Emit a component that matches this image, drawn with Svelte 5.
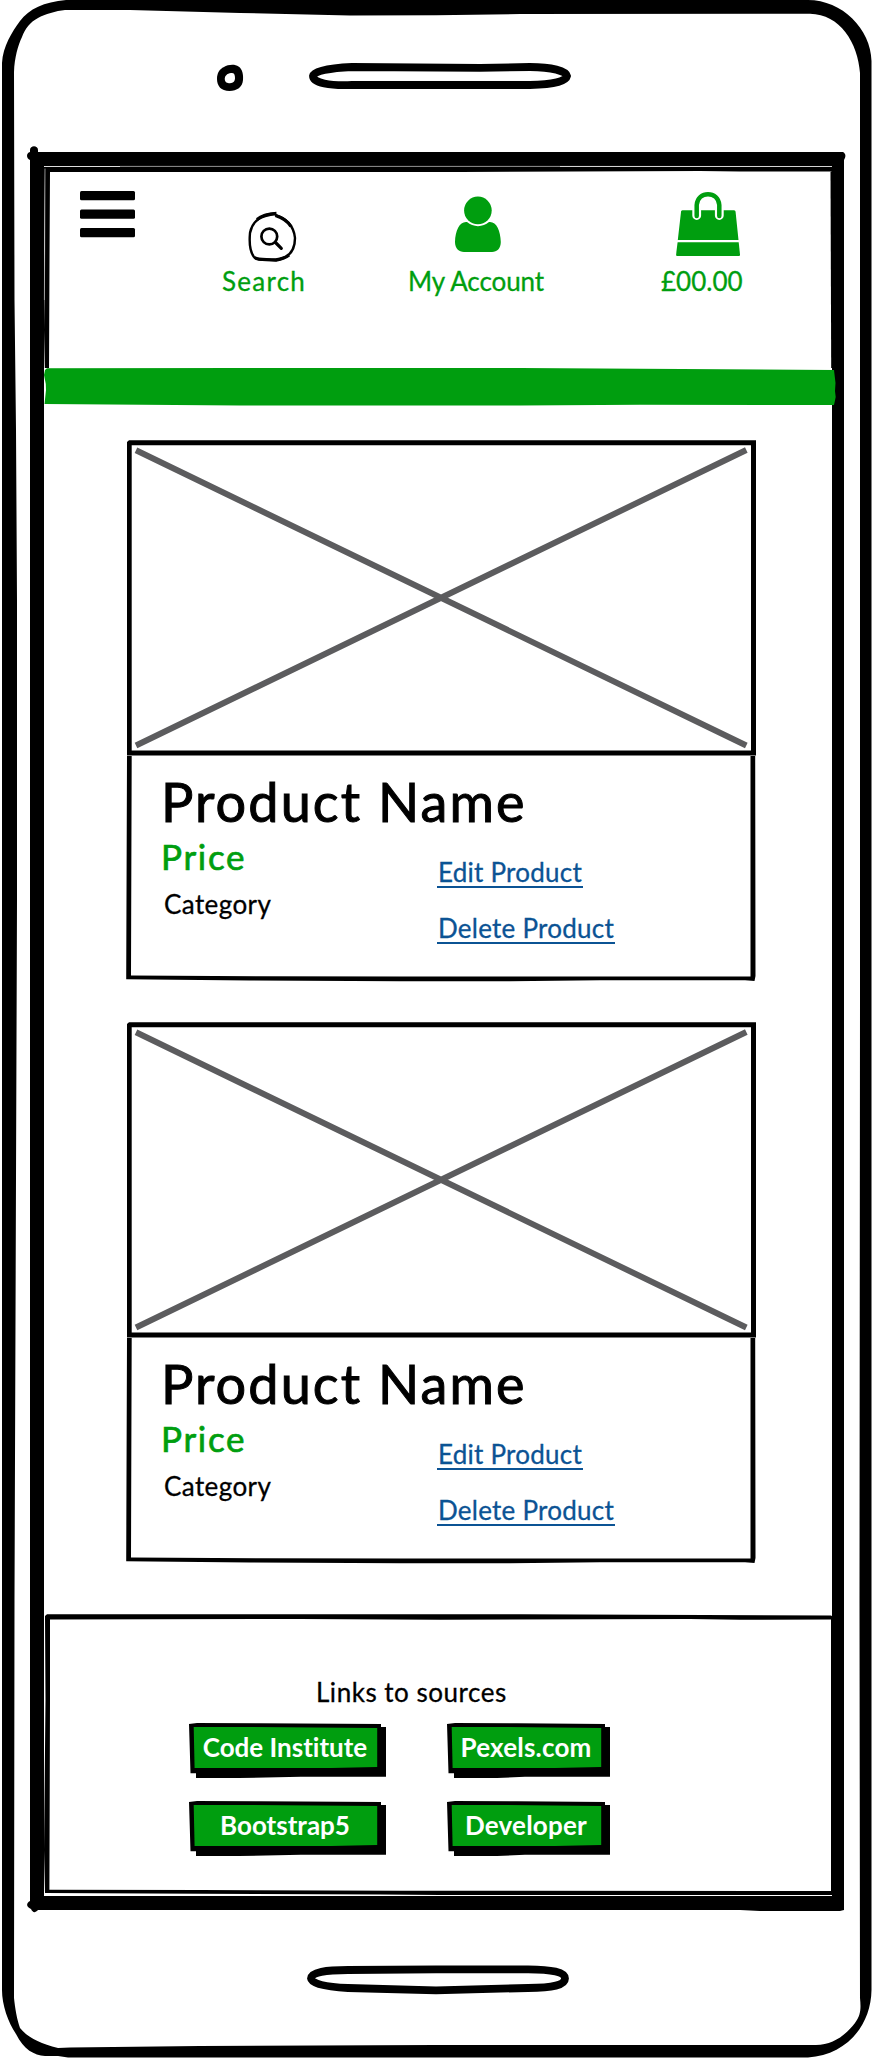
<script>
  const products = [1, 2];
  const sources = [
    { label: 'Code Institute', face: 192, spacing: 0 },
    { label: 'Pexels.com', face: 158, spacing: 0.19 },
    { label: 'Bootstrap5', face: 192, spacing: 0 },
    { label: 'Developer', face: 158, spacing: 0.2 }
  ];
</script>

<div class="phone">
  <svg class="shell" width="872" height="2058" viewBox="0 0 872 2058" aria-hidden="true">
    <!-- outer body -->
    <path fill-rule="evenodd" d="M66 0H808C842 0 871 29 871.5 61V1990C871 2026 846 2055 808 2057.5H68L58 2056H45C34 2055 24 2050 16 2034C8 2022 2 2005 2 1990V63C3 46 12 32 20 21C29 9 44 2 66 0Z
      M65 10C56 11 45 14 38 18C30 22 25 29 22 37C18 45 14.500 58 14 72L14.500 300L16 430L17 600V900L14.500 1600L14 1998C15 2008 17 2020 20 2028C27 2037 39 2043 58 2048L70 2047.500L200 2046L436 2045H816C832 2045 845 2036 855 2023C861 2015 861 2008 860 1998L859.500 1600L860 1000V73C858 43 840 14 810 13.700L520 14L436 15.300L350 15.500L240 13L130 10Z"/>
    <!-- screen bezel -->
    <path fill-rule="evenodd" d="M30 150C30 145 38 145 38 150V152H843C846 154 846 156 844 160V1910L840 1911H760L740 1910H38C35 1913 33 1913 31 1909C26 1907 26 1903 30 1901V160C26 158 26 153 30 152Z
      M44 166V1896H832V166Z"/>
    <path d="M44 167L49 166.400H832V171.500L740 171.500L700 171L460 172H50L49.500 260L49 368H44.800L44 330L45 250Z"/>
    <path d="M44.400 300L45 168.500" stroke="#aaa" stroke-width=".8" fill="none"/>
    <path d="M44.500 166.500H120" stroke="#ddd" stroke-width="1" fill="none"/>
    <path d="M120 166.300H500L831 166.500" stroke="#888" stroke-width=".6" fill="none"/>
    <path d="M560 166.500H832" stroke="#ddd" stroke-width=".9" fill="none"/>
    <path d="M832 171V368H831.200L830.500 172Z"/>
  </svg>

  <div class="bezel top">
    <svg class="camera" width="28" height="28" viewBox="216 64 28 28">
      <path fill-rule="evenodd" d="M224 67C228 64.500 235 64 238.500 66.500C242.500 69 243.500 75 243 80C242.500 87 237 91 229.500 91C221 91 217 86 217 79C217 73 219.500 69 224 67ZM231 73C227 73.500 224.500 76 224.800 79.500C225.200 82.500 227 83.200 230 83.200C233.500 83.200 235 81 235 78C235 74.500 234 72.500 231 73Z"/>
    </svg>
    <svg class="speaker" width="264" height="28" viewBox="308 62 264 28">
      <path d="M352 67L480 67.800L530 67C552 67 566 71 567 76C566 81 553 84.800 530 85H352C330 86 313 83 313 76C314 71 330 68 352 67Z" fill="none" stroke="#000" stroke-width="7.800"/>
    </svg>
  </div>

  <header>
    <svg class="burger" width="56" height="48" viewBox="80 190 56 48">
      <rect x="80" y="191" width="55" height="9.300" rx="1.500"/>
      <rect x="80" y="209.500" width="55" height="9.300" rx="1.500"/>
      <rect x="80" y="228" width="55" height="9.300" rx="1.500"/>
    </svg>
    <div class="item search">
      <svg width="50" height="76" viewBox="247 188 50 76">
        <path d="M276 213.500C262 214 252 221 250 233C249 244 251 253 254 257C257 260 261 259.500 276 260C290 258 295 250 295 238C294 226 286 218 275 215" fill="none" stroke="#000" stroke-width="2.400"/>
        <path d="M257 219.500C262 215.500 267 214.200 276.500 213.500M275.500 215.500C283 218 288 221.500 291 226.500M254.500 257.500C258 260 262 259.200 276 260C282 259 286 257.500 289 255" fill="none" stroke="#000" stroke-width="3.300"/>
        <circle cx="269.300" cy="236.500" r="7.900" fill="none" stroke="#000" stroke-width="2.700"/>
        <path d="M275.500 242.500L281.300 248.300" stroke="#000" stroke-width="3.200" stroke-linecap="round"/>
      </svg>
      <span>Search</span>
    </div>
    <div class="item account">
      <svg width="46" height="76" viewBox="455 188 46 76" fill="#009e0f">
        <circle cx="477.900" cy="210.400" r="13.800"/>
        <path d="M467 222C473 227.500 483 227.500 489 222C496 221 500.500 230 500.800 242C500.800 248.500 497 252 492 252H464C459 252 455 248.500 455 242C455.200 230 460 221 467 222Z"/>
      </svg>
      <span>My Account</span>
    </div>
    <div class="item basket">
      <svg width="64" height="76" viewBox="676 188 64 76" fill="#009e0f">
        <path d="M682.500 210.300H734C735 210.300 735.500 211 735.600 212L738.500 240H677.800L681 212C681 211 681.600 210.300 682.500 210.300Z"/>
        <path d="M677.600 242.300H738.700L740 254.500C740 255.500 739.500 256 738.500 256H677.500C676.500 256 676 255.500 676.100 254.500Z"/>
        <path d="M696.700 209V215.500M719.300 209V215.500" stroke="#fff" stroke-width="8.800" stroke-linecap="round"/>
        <path d="M696.700 216V205C697.500 190.500 718.500 190.500 719.300 205V216" fill="none" stroke="#009e0f" stroke-width="4.500" stroke-linecap="round"/>
      </svg>
      <span>£00.00</span>
    </div>
  </header>

  <svg class="bar" width="792" height="38" viewBox="44 368 792 38">
    <path d="M45 370L47 368.300L240 368H520L640 368.800L834 370L835.500 383L835 391L835.700 397L834 405L640 404.800L520 405.600H240L44.500 404L46 390L45.800 384L44 375Z" fill="#009e0f"/>
  </svg>

  <main>
    {#each products as id (id)}
      <article>
        <svg class="photo" width="630" height="316" viewBox="126 440 630 316">
          <path fill-rule="evenodd" d="M127 442L129 440.300H756V755.500H127ZM131.700 445.300V750.500H751V445.200Z"/>
          <path d="M136 450.300L746.300 745.500M136 745.500L746.300 450" stroke="#5c5c5e" stroke-width="6"/>
        </svg>
        <div class="details">
          <svg class="outline" width="630" height="226" viewBox="126 756 630 226" aria-hidden="true">
            <path fill-rule="evenodd" d="M127 756H755.200L755.500 976L754.500 981L745 980.200H600L510 981.300H400L250 980.500L126.200 979.300ZM131.700 756L131 975.600L260 976.200L400 976.500H750.500V756Z"/>
          </svg>
          <h2>Product Name</h2>
          <div class="columns">
            <div class="info">
              <p class="price">Price</p>
              <p class="category">Category</p>
            </div>
            <div class="actions">
              <a class="edit" href="#edit">Edit Product</a>
              <a class="delete" href="#delete">Delete Product</a>
            </div>
          </div>
        </div>
      </article>
    {/each}
  </main>

  <footer>
    <svg class="outline" width="790" height="282" viewBox="44 1614 790 282" aria-hidden="true">
      <path fill-rule="evenodd" d="M45 1616L47 1614.200H520L831 1615.500L833.500 1617V1895H440L380 1894.500L45 1893L44 1850L45.500 1700ZM50 1619.600V1700L49.400 1889.700L200 1890L400 1890.800L831 1891V1619.500L740 1619.800L690 1619L440 1619.700L300 1619Z"/>
    </svg>
    <p>Links to sources</p>
    <div class="sources">
      {#each sources as s (s.label)}
        <button style="width: {s.face}px; letter-spacing: {s.spacing}px">
          <svg class="outline" width={s.face + 6} height="56" viewBox="0 0 {s.face + 6} 56" aria-hidden="true">
            <path d="M0 1L8 0L70 .3L{s.face} 1V4H{s.face + 5}V53.700L{s.face - 80} 53.700L50 55H7V50.300H1.500Z"/>
            <path d="M4.700 4H60L{s.face - 3.800} 5V44L{s.face - 50} 45H5.600Z" fill="#009e0f"/>
          </svg>
          <span>{s.label}</span>
        </button>
      {/each}
    </div>
  </footer>

  <div class="bezel bottom">
    <svg width="264" height="34" viewBox="306 1962 264 34">
      <path d="M348 1970L436 1969.300H528C552 1969.500 565 1972 565 1978.500C565 1985 553 1987.800 528 1988L436 1990.300L348 1988C326 1987 311.500 1984 311 1978.500C311.500 1972 326 1970 348 1970Z" fill="none" stroke="#000" stroke-width="7.800"/>
    </svg>
  </div>
</div>

<style>
  :global(body) {
    margin: 0;
    background: #fff;
  }
  .phone {
    position: relative;
    box-sizing: border-box;
    width: 872px;
    height: 2058px;
    padding: 0 36px 0 44px;
    overflow: hidden;
    font: 400 26px/32px Lato, 'Open Sans', sans-serif;
    font-variant-ligatures: none;
    color: #000;
    -webkit-text-stroke: 0.3px currentColor;
  }
  svg {
    display: block;
    flex: none;
  }
  .shell,
  .outline {
    position: absolute;
    top: 0;
    left: 0;
    pointer-events: none;
  }
  h2,
  p {
    margin: 0;
    white-space: nowrap;
  }
  .bezel,
  header {
    display: flex;
    align-items: flex-start;
    position: relative;
    box-sizing: border-box;
  }
  .top {
    height: 166px;
  }
  .camera {
    margin: 64px 0 0 172px;
  }
  .speaker {
    margin: 62px 0 0 64px;
  }
  header {
    height: 202px;
    padding: 22px 0 0 36px;
    color: #009e0f;
  }
  .burger {
    margin-top: 2px;
    fill: #000;
  }
  .item {
    display: flex;
    flex-direction: column;
    white-space: nowrap;
  }
  .item span {
    padding-top: 1px;
  }
  .search {
    width: 84px;
    margin-left: 86px;
    letter-spacing: 1.26px;
  }
  .search svg {
    margin-left: 25px;
  }
  .account {
    width: 138px;
    margin-left: 102px;
    letter-spacing: -0.08px;
  }
  .account svg {
    margin-left: 47px;
  }
  .basket {
    width: 84px;
    margin-left: 115px;
    letter-spacing: 0;
  }
  .basket svg {
    margin-left: 15px;
  }
  .bar {
    position: relative;
  }
  main {
    display: flex;
    flex-direction: column;
    gap: 40px;
    padding: 34px 0 50px 82px;
  }
  article {
    width: 630px;
  }
  .details {
    position: relative;
    box-sizing: border-box;
    height: 226px;
    padding: 14px 0 0 34px;
  }
  h2 {
    padding-left: 1px;
    font-size: 54px;
    font-weight: 400;
    line-height: 64px;
    letter-spacing: 2.08px;
    -webkit-text-stroke-width: 1px;
  }
  .columns {
    display: grid;
    grid-template-columns: 277px 1fr;
  }
  .price {
    padding: 1px 0 0 1px;
    font-size: 35px;
    line-height: 42px;
    letter-spacing: 1.7px;
    color: #009e0f;
    -webkit-text-stroke-width: 0.7px;
  }
  .category {
    padding: 11px 0 0 4px;
    letter-spacing: 0.41px;
  }
  .actions {
    display: flex;
    flex-direction: column;
    align-items: flex-start;
    gap: 27px;
    padding-top: 25px;
  }
  a {
    box-sizing: border-box;
    padding-left: 1px;
    border-bottom: 2px solid #0b5394;
    line-height: 27px;
    letter-spacing: 0.25px;
    white-space: nowrap;
    text-decoration: none;
    color: #0b5394;
  }
  .edit {
    width: 146px;
  }
  .delete {
    width: 178px;
  }
  footer {
    position: relative;
    box-sizing: border-box;
    height: 282px;
    padding-top: 62px;
  }
  footer p {
    margin-left: 272px;
    letter-spacing: 0.52px;
  }
  .sources {
    display: grid;
    grid-template-columns: 258px 1fr;
    row-gap: 28px;
    margin: 15px 0 0 145px;
  }
  button {
    position: relative;
    height: 50px;
    padding: 0 0 2px;
    border: 0;
    background: none;
    font: 700 26px/32px Lato, 'Open Sans', sans-serif;
    font-variant-ligatures: none;
    color: #fff;
    white-space: nowrap;
    -webkit-text-stroke: 0;
  }
  button span {
    position: relative;
  }
  .bottom {
    height: 162px;
    padding: 66px 0 0 262px;
  }
</style>
